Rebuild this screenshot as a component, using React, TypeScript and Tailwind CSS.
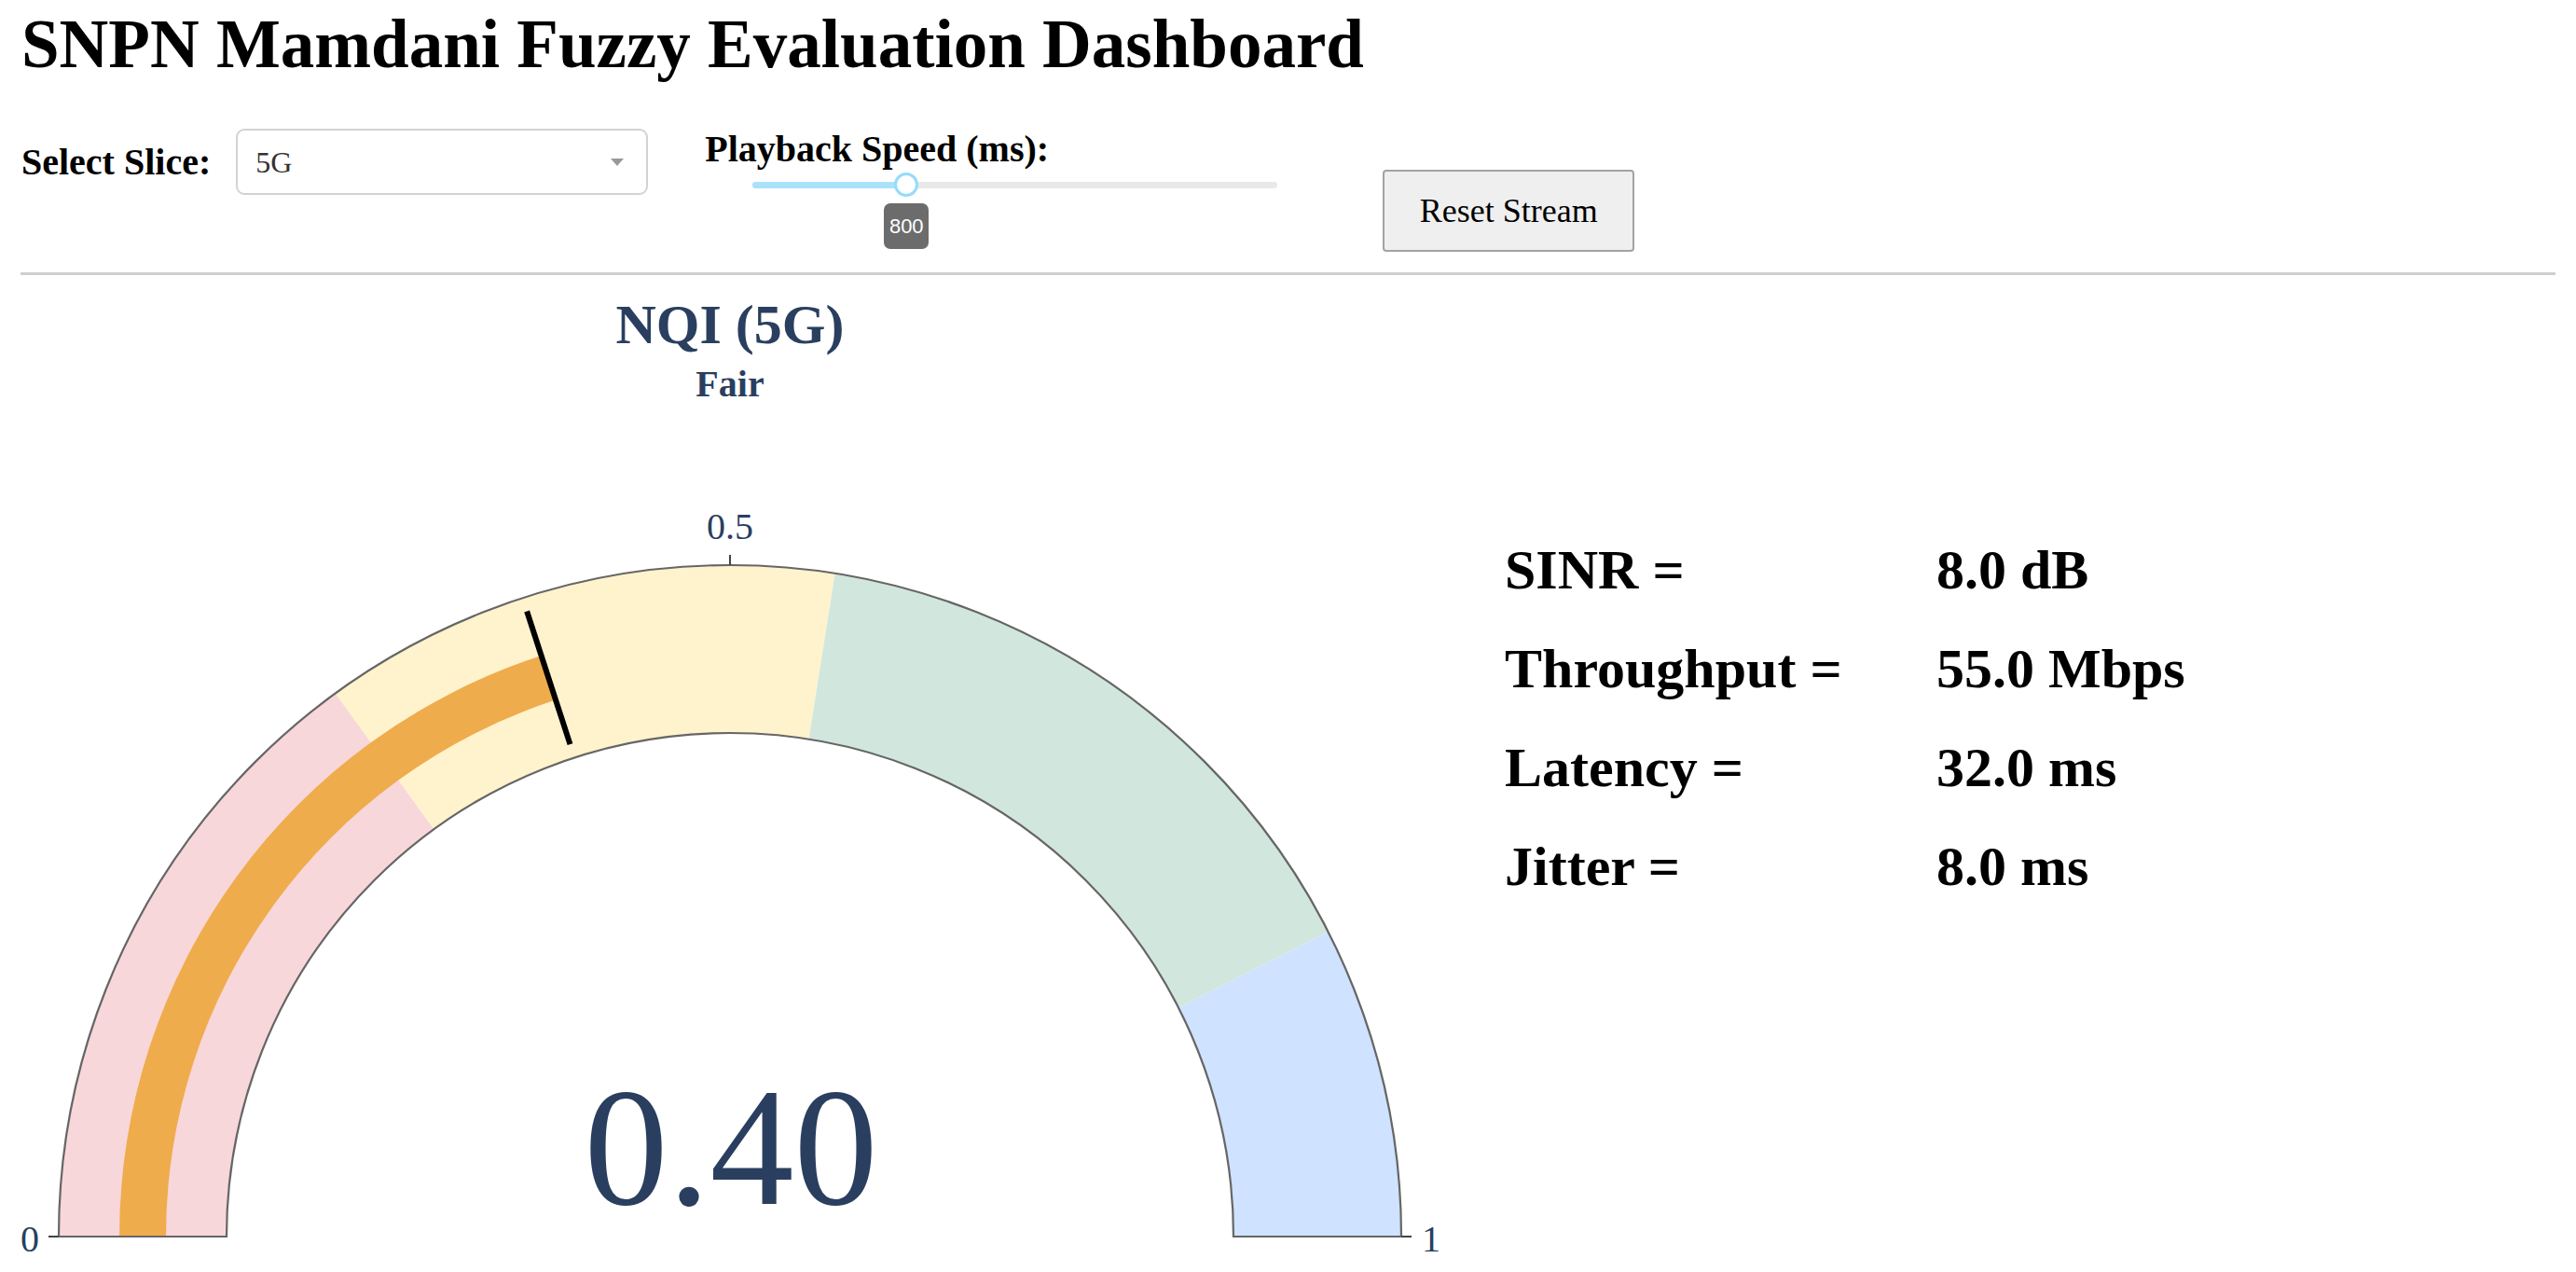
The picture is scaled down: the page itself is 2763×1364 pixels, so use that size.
import React from 'react'

const CX = 783
const CY = 1031
const R_OUT = 720
const R_IN = 540
const NAVY = '#2a3f5f'
const SERIF = "'Liberation Serif', 'Times New Roman', serif"

const STEPS = [
  { from: 0, to: 0.3, color: '#f8d7da' },
  { from: 0.3, to: 0.55, color: '#fff3cd' },
  { from: 0.55, to: 0.85, color: '#d1e7dd' },
  { from: 0.85, to: 1, color: '#cfe2ff' },
]

const METRICS = [
  { label: 'SINR =', value: '8.0 dB' },
  { label: 'Throughput =', value: '55.0 Mbps' },
  { label: 'Latency =', value: '32.0 ms' },
  { label: 'Jitter =', value: '8.0 ms' },
]

function pt(r: number, v: number): [number, number] {
  const a = Math.PI * (1 - v)
  return [CX + r * Math.cos(a), CY - r * Math.sin(a)]
}

function sector(r0: number, r1: number, v0: number, v1: number) {
  const [x1, y1] = pt(r1, v0)
  const [x2, y2] = pt(r1, v1)
  const [x3, y3] = pt(r0, v1)
  const [x4, y4] = pt(r0, v0)
  return `M${x1} ${y1} A${r1} ${r1} 0 0 1 ${x2} ${y2} L${x3} ${y3} A${r0} ${r0} 0 0 0 ${x4} ${y4} Z`
}

function Gauge({ value }: { value: number }) {
  const [tx1, ty1] = pt(555, value)
  const [tx2, ty2] = pt(705, value)
  return (
    <svg width={1580} height={1069} className="shrink-0 block">
      <text x={CX} y={73} textAnchor="middle" fontFamily={SERIF} fontWeight="bold" fontSize={60} fill={NAVY}>
        NQI (5G)
      </text>
      <text x={CX} y={130} textAnchor="middle" fontFamily={SERIF} fontWeight="bold" fontSize={40} fill={NAVY}>
        Fair
      </text>

      {STEPS.map((s) => (
        <path key={s.from} d={sector(R_IN, R_OUT, s.from, s.to)} fill={s.color} />
      ))}
      <path d={sector(605, 655, 0, value)} fill="#efac4c" />
      <path d={sector(R_IN, R_OUT, 0, 1)} fill="none" stroke="#666" strokeWidth={2.2} />
      <line x1={tx1} y1={ty1} x2={tx2} y2={ty2} stroke="#000" strokeWidth={6} />

      {/* axis ticks */}
      <line x1={CX} y1={CY - R_OUT} x2={CX} y2={CY - R_OUT - 11} stroke="#444" strokeWidth={2} />
      <line x1={CX - R_OUT} y1={CY} x2={CX - R_OUT - 11} y2={CY} stroke="#444" strokeWidth={2} />
      <line x1={CX + R_OUT} y1={CY} x2={CX + R_OUT + 11} y2={CY} stroke="#444" strokeWidth={2} />
      <text x={CX} y={283} textAnchor="middle" fontFamily={SERIF} fontSize={40} fill={NAVY}>0.5</text>
      <text x={32} y={1047} textAnchor="middle" fontFamily={SERIF} fontSize={40} fill={NAVY}>0</text>
      <text x={1535} y={1047} textAnchor="middle" fontFamily={SERIF} fontSize={40} fill={NAVY}>1</text>

      <text x={CX + 1} y={996} textAnchor="middle" fontFamily={SERIF} fontSize={180} fill={NAVY}>
        {value.toFixed(2)}
      </text>
    </svg>
  )
}

export default function App() {
  return (
    <div className="min-h-screen w-full bg-white text-black font-['Liberation_Serif','Times_New_Roman',serif]">
      <div className="pl-[23px]">
        <h1 className="pt-[12px] text-[73px] leading-[72px] font-bold">SNPN Mamdani Fuzzy Evaluation Dashboard</h1>

        <div className="mt-[54px] flex items-start">
          <div className="flex items-center h-[71px]">
            <span className="text-[40px] leading-[40px] font-bold">Select Slice:</span>
            <div className="ml-[27px] w-[442px] h-[71px] border-2 border-[#d3d3d3] rounded-[9px] bg-white flex items-center justify-between pl-[19px] pr-[24px]">
              <span className="text-[32px] leading-none text-[#333]">5G</span>
              <svg width={14} height={8} viewBox="0 0 14 8">
                <path d="M0 0 L14 0 L7 8 Z" fill="#999" />
              </svg>
            </div>
          </div>

          <div className="ml-[61px] w-[614px]">
            <div className="mt-[1.5px] text-[40px] leading-[40px] font-bold">Playback Speed (ms):</div>
            <div className="ml-[51px] mt-[5.5px] w-[563px] h-[26px] relative flex items-center">
              <div className="w-full h-[7px] rounded-full bg-[#e9e9e9]" />
              <div className="absolute left-0 top-[9.5px] w-[165px] h-[7px] rounded-full bg-[#abe2fb]" />
              <div className="absolute left-[152px] top-0 w-[26px] h-[26px] rounded-full bg-white border-[3px] border-[#96dbfa]" />
              <div className="absolute left-[141px] top-[33px] w-[48px] h-[49px] rounded-[7px] bg-[#6c6c6c] flex items-center justify-center text-white text-[22px] font-['Liberation_Sans',Arial,sans-serif]">
                800
              </div>
            </div>
          </div>

          <button className="ml-[113px] mt-[44px] w-[270px] h-[88px] bg-[#efefef] border-2 border-[#a3a3a3] rounded-[4px] text-[36px] leading-none text-black">
            Reset Stream
          </button>
        </div>
      </div>

      <div className="mx-[22px] mt-[22px] h-[3px] bg-[#cfcfcf]" />

      <div className="flex items-start">
        <Gauge value={0.4} />
        <div className="ml-[34px] mt-[263px] grid grid-cols-[463px_auto] text-[60px] leading-[106px] font-bold">
          {METRICS.map((m) => (
            <React.Fragment key={m.label}>
              <div>{m.label}</div>
              <div>{m.value}</div>
            </React.Fragment>
          ))}
        </div>
      </div>
    </div>
  )
}
